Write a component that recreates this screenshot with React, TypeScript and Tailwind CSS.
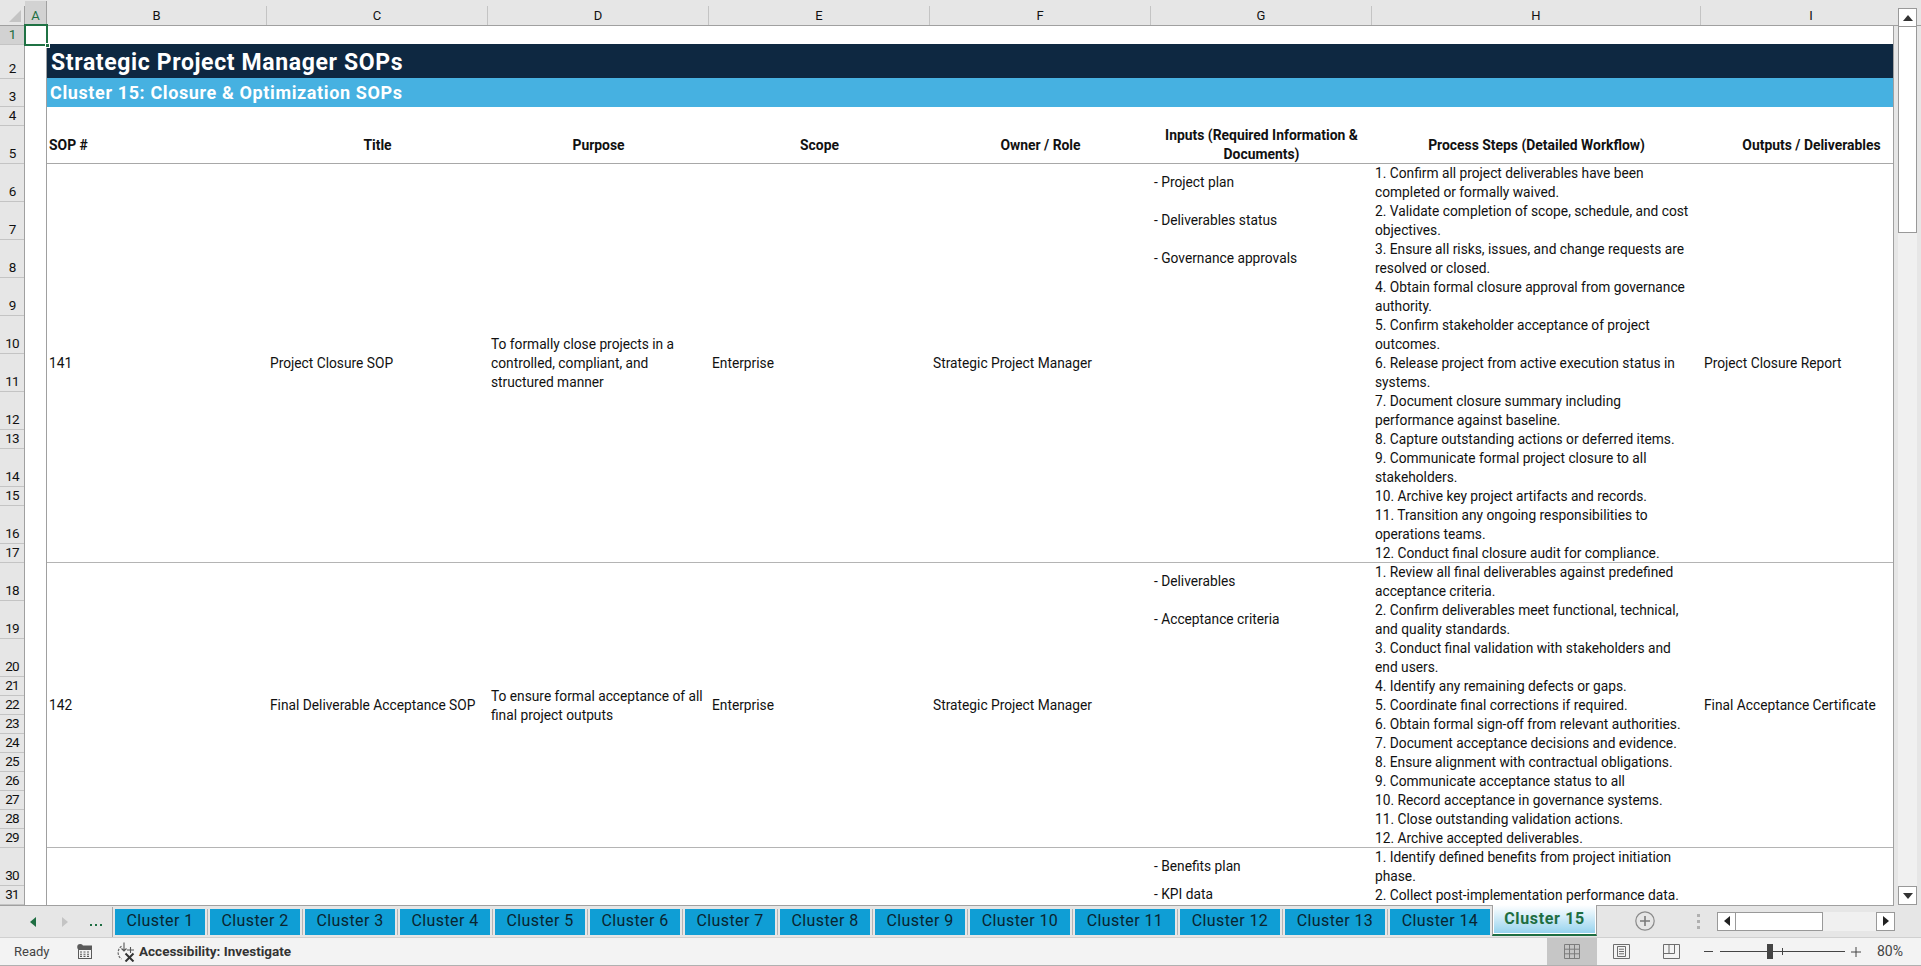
import { Fragment } from "react";

const cols = [
  { letter: "B", width: 220 },
  { letter: "C", width: 221 },
  { letter: "D", width: 221 },
  { letter: "E", width: 221 },
  { letter: "F", width: 221 },
  { letter: "G", width: 221 },
  { letter: "H", width: 329 },
  { letter: "I", width: 221 },
];

// row number + height, taken from the sheet at 80% zoom
const rows: [number, number][] = [
  [1, 19], [2, 34], [3, 28], [4, 19], [5, 38],
  [6, 38], [7, 38], [8, 38], [9, 38], [10, 38], [11, 38], [12, 38],
  [13, 19], [14, 38], [15, 19], [16, 38], [17, 19],
  [18, 38], [19, 38], [20, 38],
  [21, 19], [22, 19], [23, 19], [24, 19], [25, 19], [26, 19], [27, 19], [28, 19], [29, 19],
  [30, 38], [31, 19],
];

const sops = [
  {
    height: "h-[399px]",
    num: "141",
    title: "Project Closure SOP",
    purpose: ["To formally close projects in a", "controlled, compliant, and", "structured manner"],
    scope: "Enterprise",
    owner: "Strategic Project Manager",
    inputs: ["- Project plan", "- Deliverables status", "- Governance approvals"],
    steps: [
      "1. Confirm all project deliverables have been",
      "completed or formally waived.",
      "2. Validate completion of scope, schedule, and cost",
      "objectives.",
      "3. Ensure all risks, issues, and change requests are",
      "resolved or closed.",
      "4. Obtain formal closure approval from governance",
      "authority.",
      "5. Confirm stakeholder acceptance of project",
      "outcomes.",
      "6. Release project from active execution status in",
      "systems.",
      "7. Document closure summary including",
      "performance against baseline.",
      "8. Capture outstanding actions or deferred items.",
      "9. Communicate formal project closure to all",
      "stakeholders.",
      "10. Archive key project artifacts and records.",
      "11. Transition any ongoing responsibilities to",
      "operations teams.",
      "12. Conduct final closure audit for compliance.",
    ],
    output: "Project Closure Report",
  },
  {
    height: "h-[285px]",
    num: "142",
    title: "Final Deliverable Acceptance SOP",
    purpose: ["To ensure formal acceptance of all", "final project outputs"],
    scope: "Enterprise",
    owner: "Strategic Project Manager",
    inputs: ["- Deliverables", "- Acceptance criteria"],
    steps: [
      "1. Review all final deliverables against predefined",
      "acceptance criteria.",
      "2. Confirm deliverables meet functional, technical,",
      "and quality standards.",
      "3. Conduct final validation with stakeholders and",
      "end users.",
      "4. Identify any remaining defects or gaps.",
      "5. Coordinate final corrections if required.",
      "6. Obtain formal sign-off from relevant authorities.",
      "7. Document acceptance decisions and evidence.",
      "8. Ensure alignment with contractual obligations.",
      "9. Communicate acceptance status to all",
      "10. Record acceptance in governance systems.",
      "11. Close outstanding validation actions.",
      "12. Archive accepted deliverables.",
    ],
    output: "Final Acceptance Certificate",
  },
];

const tabs = [
  { n: 1, w: "w-[90px]" }, { n: 2, w: "w-[90px]" }, { n: 3, w: "w-[90px]" },
  { n: 4, w: "w-[90px]" }, { n: 5, w: "w-[90px]" }, { n: 6, w: "w-[90px]" },
  { n: 7, w: "w-[90px]" }, { n: 8, w: "w-[90px]" }, { n: 9, w: "w-[90px]" },
  { n: 10, w: "w-[100px]" }, { n: 11, w: "w-[100px]" }, { n: 12, w: "w-[100px]" },
  { n: 13, w: "w-[100px]" }, { n: 14, w: "w-[100px]" },
];

const gridCols = "grid grid-cols-[220px_221px_221px_221px_221px_221px_329px_221px] w-[1875px]";

function Lines({ lines }: { lines: string[] }) {
  return (
    <div className="whitespace-nowrap">
      {lines.map((l) => (
        <div key={l}>{l}</div>
      ))}
    </div>
  );
}

function Triangle({ dir, color }: { dir: "l" | "r" | "u" | "d"; color: string }) {
  const pts = { l: "6,0 6,10 0,5", r: "0,0 6,5 0,10", u: "0,6 5,0 10,6", d: "0,0 10,0 5,6" }[dir];
  const box = dir === "l" || dir === "r" ? "0 0 6 10" : "0 0 10 6";
  const size = dir === "l" || dir === "r" ? "w-[6px] h-[10px]" : "w-[10px] h-[6px]";
  return (
    <svg viewBox={box} className={size}>
      <polygon points={pts} fill={color} />
    </svg>
  );
}

export default function App() {
  return (
    <div className="relative h-screen w-screen overflow-hidden flex flex-col bg-[#e6e6e6] font-[Roboto,sans-serif] text-[13.75px] text-[#111]">
      {/* selected cell A1 */}
      <div className="absolute z-20 left-[24px] top-[24px] w-[24px] h-[22px] border-2 border-[#1f7244]">
        <div className="absolute right-[-4px] bottom-[-4px] w-[5px] h-[5px] bg-[#1f7244] border border-white" />
      </div>

      {/* column headers */}
      <div className="flex h-[26px] shrink-0 bg-[#e6e6e6] border-b border-[#a0a0a0] text-[13px]">
        <div className="w-[25px] shrink-0 flex items-end justify-end pr-[3px] pb-[3px] border-r border-[#a0a0a0] mt-[6px]">
          <svg viewBox="0 0 12 12" className="w-[12px] h-[12px]">
            <polygon points="12,0 12,12 0,12" fill="#c4c4c4" />
          </svg>
        </div>
        <div className="w-[22px] shrink-0 bg-[#d2d2d2] border-r border-[#a0a0a0] text-[#1e6e42] flex items-center justify-center pt-[5px] mt-px">
          A
        </div>
        <div className="flex-1 flex overflow-hidden">
          {cols.map((c) => (
            <div key={c.letter} style={{ width: c.width }} className="shrink-0 pt-[6px]">
              <div className="h-full flex items-center justify-center border-r border-[#c4c4c4]">{c.letter}</div>
            </div>
          ))}
        </div>
        <div className="w-[27px] shrink-0" />
      </div>

      <div className="flex-1 flex min-h-0">
        <div className="flex flex-1 min-w-0 overflow-hidden bg-white border-b border-r border-[#a0a0a0]">
          {/* row numbers */}
          <div className="w-[25px] shrink-0 bg-[#e6e6e6] border-r border-[#a0a0a0] text-[13.5px] tracking-[-0.9px]">
            {rows.map(([n, h]) => (
              <div
                key={n}
                style={{ height: h }}
                className={`flex items-end justify-center pb-px leading-[17px] border-b border-[#c4c4c4] ${n === 1 ? "bg-[#d2d2d2] text-[#1e6e42]" : ""}`}
              >
                {n}
              </div>
            ))}
          </div>

          {/* column A */}
          <div className="w-[22px] shrink-0 border-r border-[#a0a0a0]" />

          {/* sheet */}
          <div className="flex-1 min-w-0 overflow-hidden">
            <div className="h-[18px]" />
            <div className="h-[34px] bg-[#0e2841] flex items-center pl-[4px] pt-[4px] text-white font-bold text-[23px] tracking-[0.63px] whitespace-nowrap">
              Strategic Project Manager SOPs
            </div>
            <div className="h-[29px] bg-[#46b1e1] flex items-center pl-[3px] text-white font-bold text-[18px] tracking-[0.62px] whitespace-nowrap">
              Cluster 15: Closure &amp; Optimization SOPs
            </div>
            <div className="h-[18px]" />

            {/* table head */}
            <div className={`${gridCols} h-[39px] pt-px border-b border-[#a8a8a8] font-bold text-[13.9px] leading-[19px] items-center text-center`}>
              <div className="text-left pl-[2px]">SOP #</div>
              <div>Title</div>
              <div>Purpose</div>
              <div>Scope</div>
              <div>Owner / Role</div>
              <div>
                Inputs (Required Information &amp;
                <br />
                Documents)
              </div>
              <div>Process Steps (Detailed Workflow)</div>
              <div>Outputs / Deliverables</div>
            </div>

            {sops.map((s) => (
              <div key={s.num} className={`${gridCols} ${s.height} pb-[4px] border-b border-[#b4b4b4] items-center leading-[19px]`}>
                <div className="pl-[2px]">{s.num}</div>
                <div className="px-[3px] whitespace-nowrap">{s.title}</div>
                <div className="px-[3px]"><Lines lines={s.purpose} /></div>
                <div className="px-[3px]">{s.scope}</div>
                <div className="px-[3px]">{s.owner}</div>
                <div className="self-start px-[3px]">
                  {s.inputs.map((t) => (
                    <div key={t} className="h-[38px] pb-[2px] flex items-center">{t}</div>
                  ))}
                </div>
                <div className="self-start px-[3px]"><Lines lines={s.steps} /></div>
                <div className="px-[3px] whitespace-nowrap">{s.output}</div>
              </div>
            ))}

            {/* SOP 143, only the top shows */}
            <div className={`${gridCols} leading-[19px]`}>
              <div className="col-start-6 px-[3px]">
                <div className="h-[38px] pb-[2px] flex items-center">- Benefits plan</div>
                <div className="h-[19px] pb-[2px] flex items-center">- KPI data</div>
              </div>
              <div className="px-[3px]">
                <Lines lines={["1. Identify defined benefits from project initiation", "phase.", "2. Collect post-implementation performance data."]} />
              </div>
            </div>
          </div>
        </div>

        {/* vertical scrollbar */}
        <div className="w-[27px] shrink-0 flex flex-col items-end px-[4px] bg-[#e6e6e6]">
          <div className="w-[19px] h-[19px] -mt-[18px] shrink-0 bg-white border border-[#999] flex items-center justify-center">
            <Triangle dir="u" color="#333" />
          </div>
          <div className="w-[19px] h-[207px] shrink-0 bg-white border border-[#999] -mt-px" />
          <div className="w-[19px] flex-1 bg-[#f0f0f0]" />
          <div className="w-[19px] h-[19px] shrink-0 bg-white border border-[#999] flex items-center justify-center mb-[1px]">
            <Triangle dir="d" color="#333" />
          </div>
        </div>
      </div>

      {/* sheet tabs */}
      <div className="h-[32px] shrink-0 flex bg-[#e6e6e6] border-b border-[#d0d0d0]">
        <div className="w-[113px] shrink-0 flex items-center h-[30px] border-r border-[#a8a8a8] mt-[1px]">
          <div className="ml-[30px]"><Triangle dir="l" color="#1e6e42" /></div>
          <div className="ml-[26px]"><Triangle dir="r" color="#c4c4c4" /></div>
          <div className="ml-[22px] flex gap-[3px] mt-[6px]">
            <div className="w-[2px] h-[2px] bg-[#1e6e42]" />
            <div className="w-[2px] h-[2px] bg-[#1e6e42]" />
            <div className="w-[2px] h-[2px] bg-[#1e6e42]" />
          </div>
        </div>
        <div className="flex gap-[2px] pl-[2px] mt-[3px] h-[26px]">
          {tabs.map((t) => (
            <Fragment key={t.n}>
              <div className={`${t.w} h-full pb-[3px] bg-[#0f9ed5] flex items-center justify-center text-[16px] tracking-[0.4px] text-[#0a2530]`}>
                Cluster {t.n}
              </div>
              {t.n < 14 && <div className="w-px h-full bg-[#b4b4b4]" />}
            </Fragment>
          ))}
        </div>
        <div className="relative z-10 -mt-px ml-[2px] w-[105px] h-[31px] border-x border-[#a0a0a0] border-b-2 border-b-[#1e6e42] bg-white px-px pb-px">
          <div className="h-full bg-gradient-to-b from-white to-[#96d3ee] flex items-center justify-center text-[16px] font-bold tracking-[0.65px] text-[#1e6e42]">
            Cluster 15
          </div>
        </div>
        <div className="flex items-center ml-[38px] h-[30px]">
          <svg viewBox="0 0 20 20" className="w-[20px] h-[20px]">
            <circle cx="10" cy="10" r="9.2" fill="none" stroke="#8a8a8a" strokeWidth="1.2" />
            <path d="M10 5v10M5 10h10" stroke="#7a7a7a" strokeWidth="1.6" />
          </svg>
          <div className="ml-[42px] flex flex-col gap-[3px]">
            <div className="w-[3px] h-[3px] bg-[#b0b0b0]" />
            <div className="w-[3px] h-[3px] bg-[#b0b0b0]" />
            <div className="w-[3px] h-[3px] bg-[#b0b0b0]" />
          </div>
          <div className="ml-[17px] flex w-[178px] h-[19px] bg-[#f0f0f0]">
            <div className="w-[19px] h-full bg-white border border-[#999] flex items-center justify-center"><Triangle dir="l" color="#222" /></div>
            <div className="w-[88px] h-full bg-white border border-[#999] -ml-px" />
            <div className="flex-1" />
            <div className="w-[19px] h-full bg-white border border-[#999] flex items-center justify-center"><Triangle dir="r" color="#222" /></div>
          </div>
        </div>
      </div>

      {/* status bar */}
      <div className="h-[28px] shrink-0 flex items-center bg-[#f3f3f3] border-b border-[#b0b0b0] text-[#444] text-[13px]">
        <div className="ml-[14px] w-[63px]">Ready</div>
        <svg viewBox="0 0 15 15" className="w-[15px] h-[15px]">
          <circle cx="3.2" cy="3" r="3" fill="#5a5a5a" />
          <path d="M6 1.5h9v3.5H3V5h12v10H1V5" fill="#5a5a5a" />
          <path d="M1.5 5.5h13v9h-13z" fill="#f3f3f3" stroke="#5a5a5a" />
          <path d="M3 8h2M6.5 8h2M10 8h2M3 10.2h2M6.5 10.2h2M10 10.2h2M3 12.4h2M6.5 12.4h2M10 12.4h2" stroke="#5a5a5a" strokeWidth="1.1" />
        </svg>
        <svg viewBox="0 0 20 20" className="ml-[24px] w-[20px] h-[20px]">
          <path d="M5.5 4.2A7.8 7.8 0 0 0 5.5 17" fill="none" stroke="#666" strokeWidth="1.2" strokeDasharray="2.4 1.2" />
          <path d="M8 .5v8M5.5 6.5 8 9l2.5-2.5" fill="none" stroke="#555" strokeWidth="1.1" />
          <path d="M11 8h7M14.5 5v6" stroke="#555" strokeWidth="1.1" />
          <path d="M9.5 11.5l8 8M17.5 11.5l-8 8" stroke="#333" strokeWidth="2" />
        </svg>
        <div className="ml-[3px] font-bold text-[13.5px] text-[#333] whitespace-nowrap">Accessibility: Investigate</div>
        <div className="flex-1" />
        <div className="w-[50px] h-full bg-[#c6c6c6] flex items-center justify-center">
          <svg viewBox="0 0 16 15" className="w-[16px] h-[15px]">
            <path d="M.5.5h15v14H.5zM5.5.5v14M10.5.5v14M.5 5.2h15M.5 9.8h15" fill="none" stroke="#7d7d7d" />
          </svg>
        </div>
        <svg viewBox="0 0 17 15" className="ml-[16px] w-[17px] h-[15px]">
          <path d="M.5.5h16v14H.5zM4.5 2.5h8v10h-8zM6 5.2h5M6 7.5h5M6 9.8h5" fill="none" stroke="#6d6d6d" />
        </svg>
        <svg viewBox="0 0 17 15" className="ml-[33px] w-[17px] h-[15px]">
          <path d="M.5.5h16v14H.5zM.5 9.5h11V.5M6 .5v9" fill="none" stroke="#6d6d6d" />
        </svg>
        <div className="ml-[24px] w-[9px] h-px bg-[#444]" />
        <div className="relative ml-[7px] w-[125px] h-px bg-[#444]">
          <div className="absolute left-[47px] top-[-7px] w-[6px] h-[15px] bg-[#444]" />
          <div className="absolute left-[62px] top-[-3px] w-px h-[7px] bg-[#444]" />
        </div>
        <svg viewBox="0 0 10 10" className="ml-[6px] w-[10px] h-[10px]">
          <path d="M5 0v10M0 5h10" stroke="#444" strokeWidth="1" />
        </svg>
        <div className="ml-[16px] w-[44px] text-[14px]">80%</div>
      </div>
    </div>
  );
}
